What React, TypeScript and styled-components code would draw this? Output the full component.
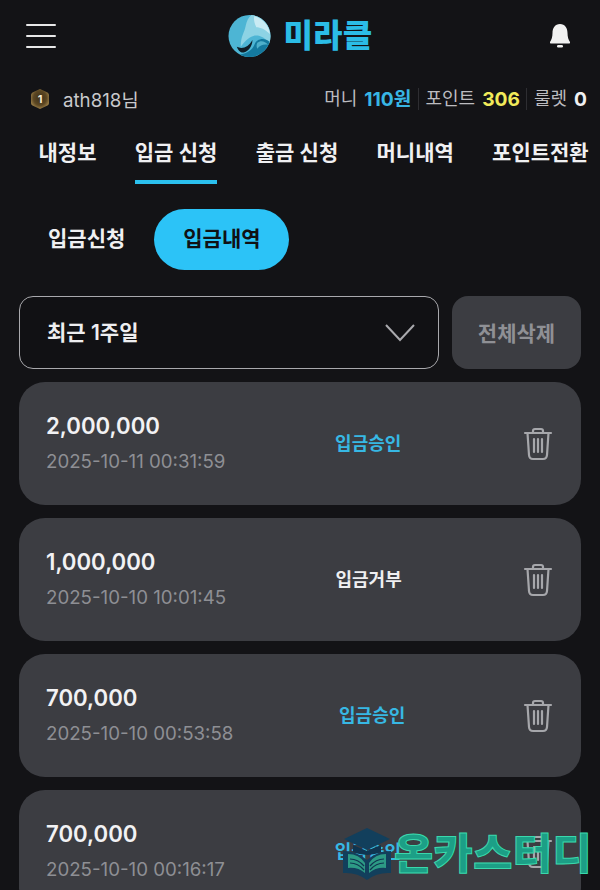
import React from "react";
import styled, { createGlobalStyle } from "styled-components";

const GlobalStyle = createGlobalStyle`
  html, body {
    margin: 0;
    padding: 0;
    background: #131316;
  }
  * {
    box-sizing: border-box;
  }
`;

const Page = styled.div`
  position: relative;
  width: 600px;
  height: 890px;
  overflow: hidden;
  background: #131316;
  color: #f1f1f3;
  font-family: Inter, "Noto Sans CJK KR", sans-serif;
`;

const Header = styled.header`
  height: 72px;
  padding: 0 26px;
  display: grid;
  grid-template-columns: 1fr auto 1fr;
  align-items: center;
`;

const MenuButton = styled.div`
  width: 30px;
  height: 24px;
  display: flex;
  flex-direction: column;
  justify-content: space-between;
  span {
    height: 2px;
    border-radius: 1px;
    background: #e8e8e8;
  }
`;

const Logo = styled.div`
  display: flex;
  align-items: center;
  gap: 12px;
  margin-left: 1px;
`;

const LogoText = styled.span`
  font-size: 32px;
  line-height: 1;
  font-weight: 900;
  letter-spacing: 0.3px;
  color: #2bbce6;
`;

const BellWrap = styled.div`
  justify-self: end;
  display: flex;
  margin-right: 3px;
`;

const InfoRow = styled.div`
  height: 54px;
  padding: 0 13px 0 30px;
  display: flex;
  align-items: center;
  justify-content: space-between;
`;

const UserBox = styled.div`
  display: flex;
  align-items: center;
  gap: 13px;
  font-size: 18.7px;
  color: #c9c9cc;
`;

const UserName = styled.span`
  margin-top: -2px;
`;

const Balance = styled.div`
  display: flex;
  align-items: center;
  font-size: 18px;
  color: #bcbcc0;
`;

const BalanceItem = styled.span`
  display: flex;
  align-items: center;
  gap: 7px;
  padding: 0 6.5px;
  line-height: 22px;
  border-left: 1px solid #2e2e32;
  &:first-child {
    border-left: 0;
  }
  &:last-child {
    padding-right: 0;
  }
`;

const BalanceValue = styled.b<{ $color: string }>`
  font-size: 19.2px;
  font-weight: 700;
  color: ${(p) => p.$color};
`;

const Tabs = styled.nav`
  display: flex;
  gap: 38.3px;
  padding-left: 38.5px;
  height: 58px;
  white-space: nowrap;
`;

const Tab = styled.div<{ $active?: boolean }>`
  height: 58px;
  padding-top: 12px;
  font-size: 21px;
  line-height: 30px;
  font-weight: 600;
  color: #f0f0f2;
  border-bottom: 4px solid ${(p) => (p.$active ? "#2bc0ee" : "transparent")};
`;

const SubTabs = styled.div`
  display: flex;
  align-items: center;
  gap: 29px;
  padding: 25px 0 0 48px;
`;

const SubTab = styled.div<{ $active?: boolean }>`
  font-size: 21px;
  font-weight: 600;
  height: 61px;
  line-height: 60px;
  border-radius: 31px;
  padding: ${(p) => (p.$active ? "0 28px 0 29px" : "0")};
  background: ${(p) => (p.$active ? "#2cc3f7" : "transparent")};
  color: ${(p) => (p.$active ? "#101114" : "#f0f0f2")};
`;

const FilterRow = styled.div`
  display: flex;
  gap: 13px;
  padding: 26px 19px 0 19px;
`;

const Select = styled.div`
  flex: 1;
  height: 73px;
  padding: 0 22px 0 27px;
  display: flex;
  align-items: center;
  justify-content: space-between;
  border: 1.5px solid #a9a9ad;
  border-radius: 14px;
  background: #111114;
  font-size: 21px;
  font-weight: 600;
  color: #eeeef0;
  span {
    margin-top: -4px;
  }
`;

const DeleteAll = styled.div`
  width: 129px;
  height: 73px;
  padding-bottom: 2px;
  display: flex;
  align-items: center;
  justify-content: center;
  border-radius: 16px;
  background: #3c3d42;
  font-size: 21px;
  font-weight: 600;
  color: #8f9095;
`;

const List = styled.div`
  display: flex;
  flex-direction: column;
  gap: 13px;
  padding: 13px 19px 0;
`;

const Card = styled.div`
  flex-shrink: 0;
  height: 123px;
  padding: 0 28px 0 27px;
  display: flex;
  align-items: center;
  justify-content: space-between;
  border-radius: 26px;
  background: #3c3d42;
`;

const CardInfo = styled.div`
  display: flex;
  flex-direction: column;
  gap: 10px;
  margin-top: -2px;
`;

const Amount = styled.div`
  font-size: 22.2px;
  line-height: 29px;
  font-weight: 600;
  color: #f2f2f4;
`;

const DateText = styled.div`
  font-size: 18.7px;
  line-height: 24px;
  color: #8e8f94;
`;

const Status = styled.div<{ $approved: boolean }>`
  font-size: 18px;
  font-weight: 600;
  margin: 0 12px 4px 0;
  color: ${(p) => (p.$approved ? "#37b8e4" : "#efeff1")};
`;

const Watermark = styled.div`
  position: absolute;
  left: 341px;
  top: 827px;
  display: flex;
  align-items: center;
  gap: 1px;
  pointer-events: none;
`;

const WatermarkText = styled.span`
  font-size: 42.5px;
  line-height: 1;
  font-weight: 900;
  letter-spacing: 0.5px;
  color: #1c9f86;
  -webkit-text-stroke: 1px #3ad8ac;
`;

const LogoMark = () => (
  <svg width="43" height="44" viewBox="0 0 44 44">
    <circle cx="22" cy="22" r="21.5" fill="#4db5d4" />
    <path d="M24 .6 C34 1.5 43.5 10 43.5 22 C43.5 25 43 27.5 42 30 C38 23 31 20.5 26 22 C20 24 17 28 13 33 C13 22 17 18 18 12 C19 7 21 3 24 .6Z" fill="#8dd3e4" />
    <path d="M27 1.5 C36 4 42 12 43 20 C38 15 33 13 29 13 C27 9 26 5 27 1.5Z" fill="#c9ebf3" />
    <path d="M42.5 28 C39 38 31 43.5 22 43.5 C18 43.5 15 42.5 12 41 C20 40 25 36 27 31 C29 25 37 23 42.5 28Z" fill="#14799e" />
    <path d="M30 29 C33 26 38 27 41 31 C37 30 33 31 30 35 C29 33 29 31 30 29Z" fill="#4fb0cb" />
    <path d="M9 33 C15 36 21 33 25 26 C25 33 20 39 14 39 C12 38 10 36 9 33Z" fill="#0e1d26" />
  </svg>
);

const BellIcon = () => (
  <svg width="22" height="26" viewBox="0 0 22 26" fill="#f1f1f1">
    <path d="M11 1 C16 1 18.5 5 18.5 10 C18.5 14 19.5 17 21 19 Q21.5 20.5 20 20.5 H2 Q.5 20.5 1 19 C2.5 17 3.5 14 3.5 10 C3.5 5 6 1 11 1Z" />
    <rect x="8" y="22" width="6" height="2.5" rx="1.2" />
  </svg>
);

const RankBadge = () => (
  <svg width="20" height="22" viewBox="0 0 20 22">
    <defs>
      <radialGradient id="rank" cx="50%" cy="45%" r="60%">
        <stop offset="0%" stopColor="#3d3019" />
        <stop offset="60%" stopColor="#5c4723" />
        <stop offset="100%" stopColor="#a88a4e" />
      </radialGradient>
    </defs>
    <path d="M10 1 L17.5 4.5 Q19 5.5 19 7 V15 Q19 16.5 17.5 17.5 L10 21 L2.5 17.5 Q1 16.5 1 15 V7 Q1 5.5 2.5 4.5Z" fill="url(#rank)" />
    <text x="10" y="15" textAnchor="middle" fontSize="11" fontWeight="700" fill="#f5ecd6" fontFamily="Inter, sans-serif">1</text>
  </svg>
);

const ChevronIcon = () => (
  <svg width="32" height="20" viewBox="0 0 32 20" fill="none" stroke="#a9a9ad" strokeWidth="2">
    <path d="M2 2 L16 17 L30 2" />
  </svg>
);

const TrashIcon = () => (
  <svg width="30" height="34" viewBox="0 0 30 34" fill="none" stroke="#a6a7ab" strokeWidth="2.2" strokeLinecap="round" strokeLinejoin="round">
    <path d="M2 6 H28" />
    <path d="M10 6 V4 Q10 2 12 2 H18 Q20 2 20 4 V6" />
    <path d="M4.5 6 L6 28 Q6.3 32 10 32 H20 Q23.7 32 24 28 L25.5 6" />
    <path d="M11 12 V25 M15 12 V25 M19 12 V25" />
  </svg>
);

const WatermarkIcon = () => (
  <svg width="52" height="54" viewBox="0 0 52 54">
    <path d="M3 12 L26 1 L49 12 L26 23Z" fill="#123f5c" />
    <path d="M12 18 V25 Q26 31 40 25 V18 L26 24Z" fill="#0f3550" />
    <path d="M2 24 Q16 24 26 33 Q36 24 50 24 V46 Q36 45 26 53 Q16 45 2 46Z" fill="#123f5c" />
    <path d="M7 27 Q18 27 24 36 V46 Q17 40 7 41Z" fill="#2d9a85" />
    <path d="M45 27 Q34 27 28 36 V46 Q35 40 45 41Z" fill="#2d9a85" />
    <path d="M9 32 Q17 32 23 39 M9 36 Q17 36 23 43 M43 32 Q35 32 29 39 M43 36 Q35 36 29 43" fill="none" stroke="#0f3550" strokeWidth="1.2" />
  </svg>
);

const tabs = ["내정보", "입금 신청", "출금 신청", "머니내역", "포인트전환"];

const deposits = [
  { amount: "2,000,000", date: "2025-10-11 00:31:59", status: "입금승인" },
  { amount: "1,000,000", date: "2025-10-10 10:01:45", status: "입금거부" },
  { amount: "700,000", date: "2025-10-10 00:53:58", status: "입금승인" },
  { amount: "700,000", date: "2025-10-10 00:16:17", status: "입금승인" },
];

const App = () => {
  return (
    <Page>
      <GlobalStyle />
      <Header>
        <MenuButton>
          <span />
          <span />
          <span />
        </MenuButton>
        <Logo>
          <LogoMark />
          <LogoText>미라클</LogoText>
        </Logo>
        <BellWrap>
          <BellIcon />
        </BellWrap>
      </Header>

      <InfoRow>
        <UserBox>
          <RankBadge />
          <UserName>ath818님</UserName>
        </UserBox>
        <Balance>
          <BalanceItem>
            머니 <BalanceValue $color="#38b6e4">110원</BalanceValue>
          </BalanceItem>
          <BalanceItem>
            포인트 <BalanceValue $color="#f1ea5a">306</BalanceValue>
          </BalanceItem>
          <BalanceItem>
            룰렛 <BalanceValue $color="#f0f0f2">0</BalanceValue>
          </BalanceItem>
        </Balance>
      </InfoRow>

      <Tabs>
        {tabs.map((tab) => (
          <Tab key={tab} $active={tab === "입금 신청"}>
            {tab}
          </Tab>
        ))}
      </Tabs>

      <SubTabs>
        <SubTab>입금신청</SubTab>
        <SubTab $active>입금내역</SubTab>
      </SubTabs>

      <FilterRow>
        <Select>
          <span>최근 1주일</span>
          <ChevronIcon />
        </Select>
        <DeleteAll>전체삭제</DeleteAll>
      </FilterRow>

      <List>
        {deposits.map((item) => (
          <Card key={item.date}>
            <CardInfo>
              <Amount>{item.amount}</Amount>
              <DateText>{item.date}</DateText>
            </CardInfo>
            <Status $approved={item.status === "입금승인"}>{item.status}</Status>
            <TrashIcon />
          </Card>
        ))}
      </List>

      <Watermark>
        <WatermarkIcon />
        <WatermarkText>온카스터디</WatermarkText>
      </Watermark>
    </Page>
  );
};

export default App;
